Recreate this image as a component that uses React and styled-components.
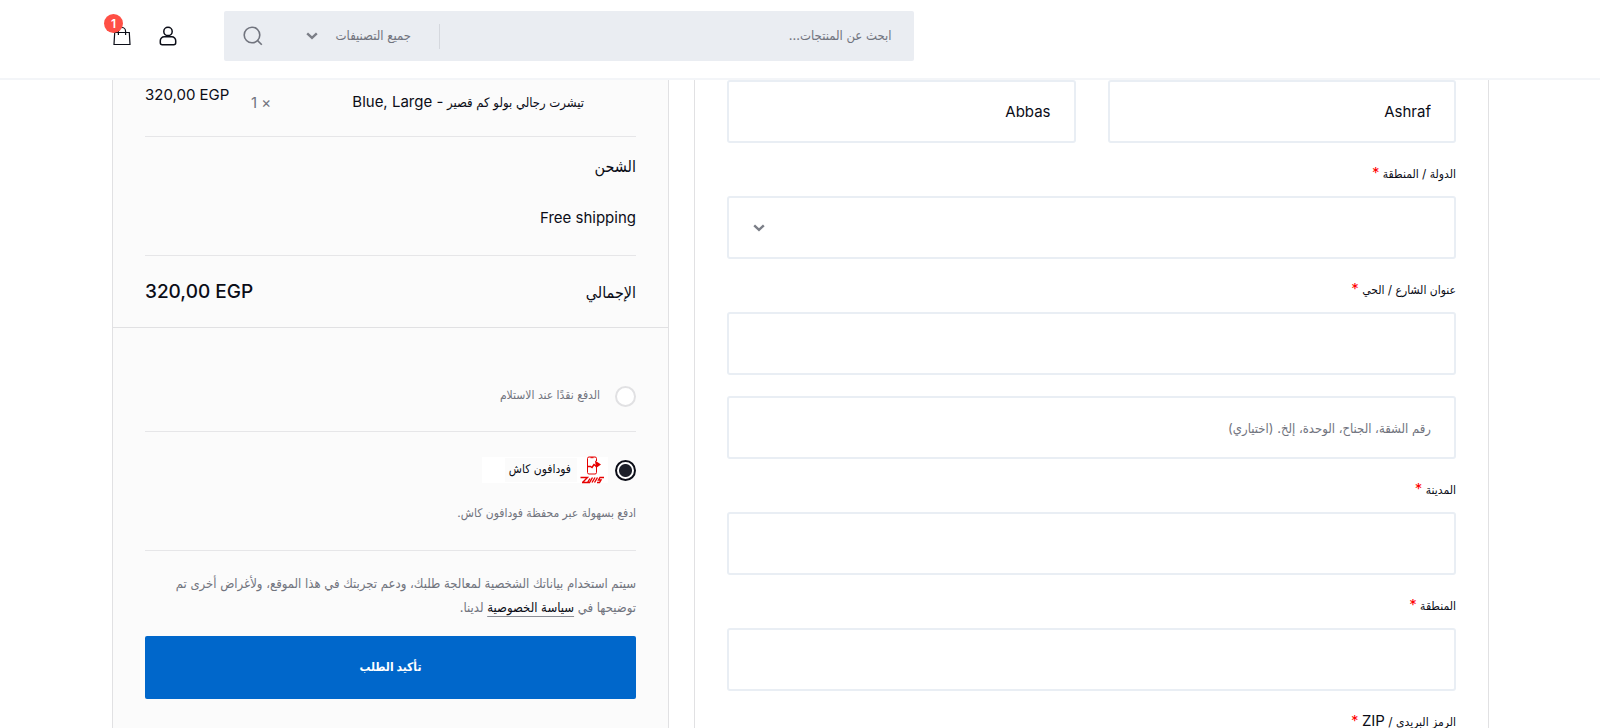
import React from "react";
import styled, { createGlobalStyle, css } from "styled-components";

const Global = createGlobalStyle`
  *, *::before, *::after { box-sizing: border-box; }
  body { margin: 0; background: #fff; }
  body, input, select, button {
    font-family: Inter, "DejaVu Sans Condensed", "DejaVu Sans", sans-serif;
    font-size: 13px;
    color: #0b0d17;
  }
`;

const ink = "#0b0d17";
const muted = "#71747e";
const line = "#e1e1e3";
const field = "#e9eef4";

const Page = styled.div`
  direction: rtl;
  height: 100vh;
  display: flex;
  flex-direction: column;
  overflow: hidden;
`;

const Header = styled.header`
  flex: none;
  display: flex;
  justify-content: flex-end;
  align-items: flex-start;
  height: 80px;
  padding: 11px 111px 0 110px;
  border-bottom: 2px solid #f3f5f8;
`;

const SearchBar = styled.form`
  width: 50%;
  height: 50px;
  display: flex;
  align-items: center;
  background: #eaedf2;
  border-radius: 2px;
`;

const SearchInput = styled.input`
  flex: 1;
  min-width: 0;
  height: 50px;
  padding: 0 22px 2px;
  border: 0;
  outline: 0;
  background: none;
  &::placeholder { color: ${muted}; opacity: 1; }
`;

const SelectWrap = styled.div`
  display: grid;
  align-items: center;
  > * { grid-area: 1 / 1; }
  > svg { justify-self: end; pointer-events: none; margin-left: ${(p) => p.$inset}px; }
`;

const CategoryWrap = styled(SelectWrap)`
  width: 159px;
  border-right: 1px solid #d5d8de;
`;

const CategorySelect = styled.select`
  appearance: none;
  width: 100%;
  height: 25px;
  padding: 0 28px 2px 40px;
  border: 0;
  background: none;
  color: ${muted};
`;

const IconButton = styled.button`
  display: flex;
  align-items: center;
  justify-content: center;
  width: 57px;
  height: 50px;
  padding: 0;
  border: 0;
  background: none;
`;

const HeaderActions = styled.nav`
  display: flex;
  gap: 22px;
  margin-right: 44px;
`;

const HeaderLink = styled.a`
  position: relative;
  display: flex;
  align-items: center;
  justify-content: center;
  width: 24px;
  height: 50px;
  color: ${ink};
`;

const Badge = styled.span`
  position: absolute;
  top: 3px;
  left: -6px;
  width: 19px;
  height: 19px;
  border-radius: 50%;
  background: #ff4f45;
  color: #fff;
  font-size: 12px;
  font-weight: 600;
  line-height: 19px;
  text-align: center;
`;

const Main = styled.main`
  flex: 1;
  min-height: 0;
  display: grid;
  grid-template-columns: 795fr 557fr;
  gap: 25px;
  padding: 0 111px 0 112px;
`;

const Billing = styled.section`
  padding: 0 32px;
  border: solid ${line};
  border-width: 0 1px;
`;

const NameRow = styled.div`
  display: grid;
  grid-template-columns: 1fr 1fr;
  gap: 32px;
`;

const fieldBox = css`
  display: block;
  width: 100%;
  height: 63px;
  padding: 0 23px;
  border: 2px solid ${field};
  border-radius: 3px;
  background: #fff;
  outline: 0;
`;

const TextField = styled.input`
  ${fieldBox}
  font-size: ${(p) => (p.$latin ? 15 : 13)}px;
  margin-top: ${(p) => (p.$stacked ? 21 : 0)}px;
  &::placeholder { color: ${muted}; opacity: 1; }
`;

const CountrySelect = styled.select`
  ${fieldBox}
  appearance: none;
`;

const Label = styled.label`
  display: block;
  height: 53px;
  padding-top: 19px;
  line-height: 22px;
  font-size: 12px;
  color: ${ink};
`;

const Required = styled.abbr`
  color: #f00;
  font-size: 15px;
  text-decoration: none;
`;

const Latin = styled.span`
  font-size: 15px;
`;

const Summary = styled.section`
  background: #fbfbfb;
  border: solid ${line};
  border-width: 0 1px;
`;

const Block = styled.div`
  margin: 0 32px;
  border-bottom: ${(p) => (p.$last ? 0 : 1)}px solid #e6e6e8;
`;

const ProductRow = styled(Block)`
  display: flex;
  align-items: flex-start;
  height: 57px;
  padding-right: 52px;
  font-size: 15px;
  line-height: 22px;
`;

const ProductName = styled.span`
  padding-top: 11px;
  font-size: 13px;
`;

const Quantity = styled.span`
  margin-right: auto;
  padding-top: 12px;
  color: ${muted};
`;

const Price = styled.span`
  width: 106px;
  padding-top: 4px;
  padding-right: 24px;
  white-space: nowrap;
`;

const ShippingBlock = styled(Block)`
  height: 119px;
  padding-top: 16px;
`;

const Title = styled.h3`
  margin: 0;
  font-size: 16px;
  font-weight: 400;
  line-height: 26px;
`;

const ShippingMethod = styled.p`
  margin: 28px 0 0;
  font-size: 15px;
  line-height: 22px;
`;

const TotalRow = styled.div`
  display: flex;
  justify-content: space-between;
  align-items: center;
  height: 72px;
  padding: 0 32px;
  border-bottom: 1px solid ${line};
`;

const Total = styled.strong`
  font-size: 19px;
  font-weight: 500;
`;

const PaymentOption = styled(Block)`
  padding: ${(p) => p.$top}px 0 ${(p) => p.$bottom}px;
`;

const RadioLabel = styled.label`
  display: flex;
  align-items: center;
  gap: 15px;
  font-size: 12px;
  color: ${(p) => (p.$active ? ink : muted)};
`;

const MethodText = styled.span`
  padding-bottom: 5px;
`;

const Radio = styled.input`
  appearance: none;
  flex: none;
  width: 21px;
  height: 21px;
  margin: 0;
  border: 2px solid #e1e1e3;
  border-radius: 50%;
  background: #fff;
  &:checked {
    border-color: ${ink};
    background: radial-gradient(circle, #1c1f29 0 6px, #fff 7px);
  }
`;

const MethodStrip = styled.span`
  display: flex;
  align-items: center;
  width: 126px;
  height: 26px;
  margin-right: -8px;
  padding-right: 4px;
  background: #fff;
`;

const MethodName = styled.span`
  margin-right: 3px;
  padding: 0 6px 2px 4px;
  background: #fbfbfb;
  line-height: 22px;
`;

const Note = styled.p`
  margin: ${(p) => p.$top}px 0 0;
  color: ${muted};
  font-size: 12px;
  line-height: 24px;
`;

const PrivacyNote = styled(Note)`
  font-size: 13px;
`;

const PolicyLink = styled.a`
  color: ${ink};
  text-decoration: underline;
  text-decoration-color: #8b8e96;
  text-underline-offset: 4px;
`;

const SubmitButton = styled.button`
  display: block;
  width: 100%;
  height: 63px;
  margin-top: 17px;
  padding-bottom: 4px;
  border: 0;
  border-radius: 2px;
  background: #0067cb;
  color: #fff;
  font-size: 12px;
  font-weight: 700;
`;

const Chevron = () => (
  <svg width="12" height="8" viewBox="0 0 12 8" fill="none" stroke="#7b7e87" strokeWidth="2.4" aria-hidden="true">
    <path d="M1.2 1.3 6 5.8l4.8-4.5" />
  </svg>
);

const SearchIcon = () => (
  <svg width="20" height="20" viewBox="0 0 20 20" fill="none" stroke="#71747e" strokeWidth="1.6" aria-hidden="true">
    <circle cx="9" cy="9" r="7.8" />
    <path d="m14.6 14.6 4.2 4.2" />
  </svg>
);

const BagIcon = () => (
  <svg width="18" height="20" viewBox="0 0 18 20" fill="none" stroke="currentColor" strokeWidth="1.2" aria-hidden="true">
    <path d="M1.700 6.500h14.600l.7 12H1zM5.400 9V5.500a3.600 4 0 0 1 7.200 0V9" />
  </svg>
);

const UserIcon = () => (
  <svg width="18" height="20" viewBox="0 0 18 20" fill="none" stroke="currentColor" strokeWidth="1.5" aria-hidden="true">
    <circle cx="9" cy="5.400" r="4.200" />
    <path d="M5.200 10.800h7.600a3.900 3.900 0 0 1 3.900 4v1.900a2 2 0 0 1-2 2H3.300a2 2 0 0 1-2-2v-1.900a3.900 3.900 0 0 1 3.900-4z" />
  </svg>
);

const CashLogo = () => (
  <svg width="24" height="28" viewBox="0 0 24 28" fill="none" stroke="#e60000" aria-hidden="true">
    <path d="M16.500 5V2.500a1.500 1.500 0 0 0-1.500-1.500H9a1.500 1.500 0 0 0-1.500 1.500v14A1.500 1.500 0 0 0 9 18h6a1.500 1.500 0 0 0 1.500-1.500V11M10.500 1.700h3" />
    <path d="M7.500 10.500h3l1.500 1 2-3 2 1.500 3-2" strokeWidth="1.500" />
    <path d="m15 4.500 6 4-5 3.500z" fill="#e60000" stroke="none" />
    <path d="M.5 21.500h7l-5 5M2 26.500h7.500l3-5M7.500 26.500l2.500-4M12 26.500l3-5M14.500 26.500l3-5M17 26.500h2.500l1.500-2.500h-2.500l1.500-2.500h4" strokeWidth="1.400" />
  </svg>
);

function Field({ id, label, children }) {
  return (
    <div>
      <Label htmlFor={id}>
        {label} <Required title="مطلوب">*</Required>
      </Label>
      {children || <TextField id={id} type="text" />}
    </div>
  );
}

export default function App() {
  return (
    <Page lang="ar">
      <Global />
      <Header>
        <SearchBar role="search" onSubmit={(e) => e.preventDefault()}>
          <SearchInput type="text" aria-label="بحث" placeholder="ابحث عن المنتجات..." />
          <CategoryWrap $inset={25}>
            <CategorySelect aria-label="التصنيف">
              <option>جميع التصنيفات</option>
            </CategorySelect>
            <Chevron />
          </CategoryWrap>
          <IconButton type="submit" aria-label="بحث">
            <SearchIcon />
          </IconButton>
        </SearchBar>
        <HeaderActions>
          <HeaderLink href="#account" aria-label="حسابي">
            <UserIcon />
          </HeaderLink>
          <HeaderLink href="#cart" aria-label="السلة">
            <BagIcon />
            <Badge>1</Badge>
          </HeaderLink>
        </HeaderActions>
      </Header>

      <Main>
        <Billing>
          <NameRow>
            <TextField $latin type="text" aria-label="الاسم الأول" defaultValue="Ashraf" />
            <TextField $latin type="text" aria-label="الاسم الأخير" defaultValue="Abbas" />
          </NameRow>
          <Field id="country" label="الدولة / المنطقة">
            <SelectWrap $inset={26}>
              <CountrySelect id="country" defaultValue="">
                <option value=""></option>
              </CountrySelect>
              <Chevron />
            </SelectWrap>
          </Field>
          <Field id="street" label="عنوان الشارع / الحي" />
          <TextField
            $stacked
            type="text"
            aria-label="رقم الشقة"
            placeholder="رقم الشقة، الجناح، الوحدة، إلخ. (اختياري)"
          />
          <Field id="city" label="المدينة" />
          <Field id="state" label="المنطقة" />
          <Field id="zip" label={<>الرمز البريدي / <Latin>ZIP</Latin></>} />
        </Billing>

        <Summary>
          <ProductRow>
            <ProductName>
              تيشرت رجالي بولو كم قصير <Latin>- Blue, Large</Latin>
            </ProductName>
            <Quantity>× 1</Quantity>
            <Price dir="ltr">320,00 EGP</Price>
          </ProductRow>
          <ShippingBlock>
            <Title>الشحن</Title>
            <ShippingMethod>Free shipping</ShippingMethod>
          </ShippingBlock>
          <TotalRow>
            <Title>الإجمالي</Title>
            <Total dir="ltr">320,00 EGP</Total>
          </TotalRow>

          <PaymentOption $top={58} $bottom={24}>
            <RadioLabel>
              <Radio type="radio" name="payment" />
              <MethodText>الدفع نقدًا عند الاستلام</MethodText>
            </RadioLabel>
          </PaymentOption>
          <PaymentOption $top={25} $bottom={25}>
            <RadioLabel $active>
              <Radio type="radio" name="payment" defaultChecked />
              <MethodStrip>
                <CashLogo />
                <MethodName>فودافون كاش</MethodName>
              </MethodStrip>
            </RadioLabel>
            <Note $top={18}>ادفع بسهولة عبر محفظة فودافون كاش.</Note>
          </PaymentOption>
          <Block $last>
            <PrivacyNote $top={20}>
              سيتم استخدام بياناتك الشخصية لمعالجة طلبك، ودعم تجربتك في هذا الموقع، ولأغراض أخرى تم توضيحها في{" "}
              <PolicyLink href="#privacy">سياسة الخصوصية</PolicyLink> لدينا.
            </PrivacyNote>
            <SubmitButton type="button">تأكيد الطلب</SubmitButton>
          </Block>
        </Summary>
      </Main>
    </Page>
  );
}
